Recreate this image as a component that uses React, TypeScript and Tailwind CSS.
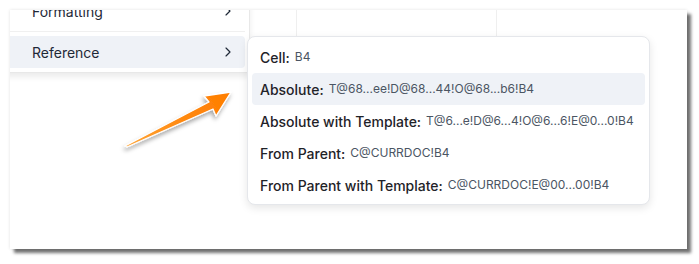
import React from "react";
import { ChevronRight } from "lucide-react";

const refs = [
  { label: "Cell:", value: "B4" },
  { label: "Absolute:", value: "T@68...ee!D@68...44!O@68...b6!B4", active: true },
  { label: "Absolute with Template:", value: "T@6...e!D@6...4!O@6...6!E@0...0!B4" },
  { label: "From Parent:", value: "C@CURRDOC!B4" },
  { label: "From Parent with Template:", value: "C@CURRDOC!E@00...00!B4" },
];

function Arrow() {
  return (
    <svg className="absolute left-0 top-0 pointer-events-none" width="699" height="264" viewBox="0 0 699 264">
      <defs>
        <linearGradient id="arrowFill" x1="126" y1="146" x2="231" y2="92" gradientUnits="userSpaceOnUse">
          <stop offset="0" stopColor="#ffa73a" />
          <stop offset="0.5" stopColor="#ff8a12" />
          <stop offset="1" stopColor="#ff7d00" />
        </linearGradient>
        <filter id="arrowShadow" x="-20%" y="-20%" width="140%" height="160%">
          <feDropShadow dx="-1" dy="3" stdDeviation="2" floodColor="#000" floodOpacity="0.35" />
        </filter>
      </defs>
      <polygon
        points="125,146 209,102 204,96 231,92 216,116 213,109 127,147"
        fill="url(#arrowFill)"
        stroke="#ffffff"
        strokeWidth="1.3"
        strokeLinejoin="round"
        filter="url(#arrowShadow)"
      />
    </svg>
  );
}

export default function App(): React.ReactElement {
  return (
    <div className="relative w-[699px] h-[264px] bg-white overflow-hidden font-['Inter',sans-serif]">
      <div className="relative ml-[10px] mt-[10px] w-[677px] h-[239px] bg-white overflow-hidden shadow-[0_0_3px_rgba(0,0,0,0.12),4px_4px_3px_rgba(0,0,0,0.55)]">
        {/* sheet behind the menus */}
        <div className="flex h-[26px]">
          <div className="w-[287px] border-r border-[#efefef]"></div>
          <div className="w-[200px] border-r border-[#efefef]"></div>
          <div className="flex-1"></div>
        </div>

        {/* context menu */}
        <div className="absolute left-[-10px] top-[-19px] w-[250px] bg-white border-r border-b border-[#e8e8e8] px-1 pt-1 pb-1 shadow-[0_4px_6px_rgba(0,0,0,0.08)]">
          <div className="flex items-center justify-between h-8 pl-[28px] pr-[9px] text-[14px] text-[#1f2937]">
            <span>Formatting</span>
            <ChevronRight size={16} strokeWidth={1.75} />
          </div>
          <div className="my-1 h-px bg-[#f0f0f0]"></div>
          <div className="flex items-center justify-between h-8 pl-[28px] pr-[9px] rounded bg-[#eff2f7] text-[14px] text-[#1f2937]">
            <span>Reference</span>
            <ChevronRight size={16} strokeWidth={1.75} />
          </div>
        </div>

        {/* reference submenu */}
        <div className="absolute left-[237px] top-[26px] w-[403px] bg-white border border-[#e5e7eb] rounded-lg px-1 pt-[4px] pb-[3px] shadow-[0_3px_8px_rgba(0,0,0,0.1)]">
          {refs.map((r) => (
            <div
              key={r.label}
              className={
                "flex items-center h-8 px-2 rounded whitespace-nowrap " +
                (r.active ? "bg-[#eff2f7]" : "")
              }
            >
              <span className="text-[14px] font-medium text-[#1f2328]">{r.label}</span>
              <span className="ml-[5px] text-[12px] text-[#4b5563]">{r.value}</span>
            </div>
          ))}
        </div>
      </div>
      <Arrow />
    </div>
  );
}
